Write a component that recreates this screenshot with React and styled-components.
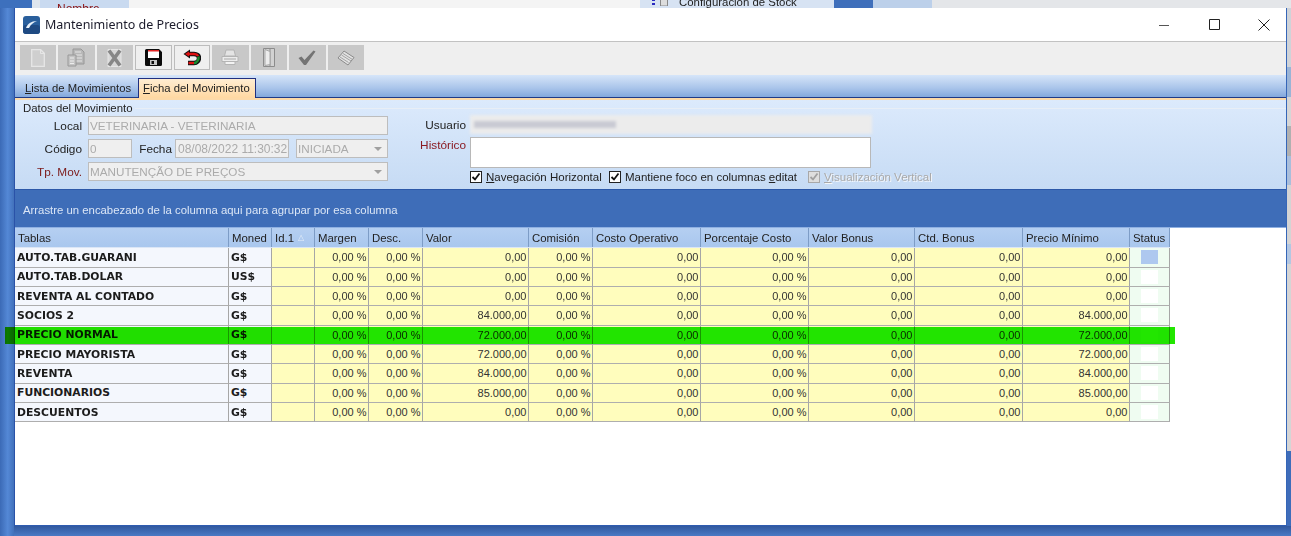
import React from 'react'
import styled, { createGlobalStyle } from 'styled-components'

const COLUMNS = '214px 43px 43px 54px 54px 106px 64px 108px 108px 106px 108px 107px 40px'

const HEADERS = ['Tablas', 'Moned', 'Id.1', 'Margen', 'Desc.', 'Valor', 'Comisión', 'Costo Operativo', 'Porcentaje Costo', 'Valor Bonus', 'Ctd. Bonus', 'Precio Mínimo', 'Status']

const ROWS = [
    { name: 'AUTO.TAB.GUARANI', coin: 'G$', price: '0,00', active: true },
    { name: 'AUTO.TAB.DOLAR', coin: 'US$', price: '0,00' },
    { name: 'REVENTA AL CONTADO', coin: 'G$', price: '0,00' },
    { name: 'SOCIOS 2', coin: 'G$', price: '84.000,00' },
    { name: 'PRECIO NORMAL', coin: 'G$', price: '72.000,00', marked: true },
    { name: 'PRECIO MAYORISTA', coin: 'G$', price: '72.000,00' },
    { name: 'REVENTA', coin: 'G$', price: '84.000,00' },
    { name: 'FUNCIONARIOS', coin: 'G$', price: '85.000,00' },
    { name: 'DESCUENTOS', coin: 'G$', price: '0,00' },
]

function NewIcon() {
    return (
        <svg width="14" height="18" viewBox="0 0 14 18">
            <path d="M.7.7h9l3.600 3.600v13H.7z" fill="#cfcfcf" stroke="#e6e6e6" strokeWidth="1.300" />
            <path d="M9.500.7v3.800h3.800" fill="none" stroke="#e6e6e6" />
        </svg>
    )
}

function CopyIcon() {
    return (
        <svg width="19" height="19" viewBox="0 0 19 19">
            <path d="M6 1h8l3 3v12H6z" fill="#b8b8b8" stroke="#989898" />
            <path d="M8 4h6M8 7h7M8 10h7M8 13h7" stroke="#e6e6e6" />
            <path d="M1 7h8v11H1z" fill="#c4c4c4" stroke="#989898" />
            <path d="M3 10h4M3 13h4M3 15.500h4" stroke="#ececec" />
        </svg>
    )
}

function DeleteIcon() {
    return (
        <svg width="15" height="18" viewBox="0 0 15 18">
            <path d="M1 .5h13v17H1z" fill="#d8d8d8" stroke="#e6e6e6" />
            <path d="M2 1.500l11 15M13 1.500l-11 15" stroke="#878787" strokeWidth="3.600" />
        </svg>
    )
}

function SaveIcon() {
    return (
        <svg width="17" height="17" viewBox="0 0 17 17">
            <path d="M1.500 0h12.500L17 3V15.500A1.500 1.500 0 0 1 15.500 17h-14A1.500 1.500 0 0 1 0 15.500V1.500A1.500 1.500 0 0 1 1.500 0z" fill="#0b0b0b" />
            <path d="M3 1h11v8H3z" fill="#fff" />
            <path d="M3 1h11v1.500H3z" fill="#e32626" />
            <path d="M5 11h7v5H5z" fill="#c4c4c4" />
            <path d="M6.500 12h2.500v3H6.500z" fill="#0b0b0b" />
        </svg>
    )
}

function UndoIcon() {
    return (
        <svg width="18" height="17" viewBox="0 0 18 17">
            <path d="M6 5h5c3 0 5 1.500 5 4s-2 5-5 5H5" fill="none" stroke="#111" strokeWidth="4.400" />
            <path d="M7 0.500v9L.5 5z" fill="#111" />
            <path d="M6 2.500v5L2 5z" fill="#e01010" />
            <path d="M6 5h5c2 0 3.500.8 4.200 2" fill="none" stroke="#e01010" strokeWidth="2.400" />
            <path d="M15.500 7.500c.6 2.800-1.500 6.500-4.500 6.500" fill="none" stroke="#1a8a2c" strokeWidth="2.400" />
            <path d="M11 14H5.500" fill="none" stroke="#e01010" strokeWidth="2.400" />
        </svg>
    )
}

function PrintIcon() {
    return (
        <svg width="18" height="17" viewBox="0 0 18 17">
            <path d="M5 1h8l1.500 6h-11z" fill="#e4e4e4" stroke="#b4b4b4" />
            <path d="M1 7.500h16v5H1z" fill="#ececec" stroke="#b4b4b4" />
            <path d="M4 12.500h10v3H4z" fill="#f2f2f2" stroke="#b4b4b4" />
            <path d="M3 10h12" stroke="#a8a8a8" />
        </svg>
    )
}

function DoorIcon() {
    return (
        <svg width="12" height="19" viewBox="0 0 12 19">
            <path d="M.5.500h11v18H.5z" fill="#d2d2d2" stroke="#8c8c8c" />
            <path d="M7 1v17" stroke="#8c8c8c" />
            <path d="M2 1.500l5 2v13l-5 1z" fill="#ececec" stroke="#a8a8a8" />
        </svg>
    )
}

function CheckIcon() {
    return (
        <svg width="18" height="16" viewBox="0 0 18 16">
            <path d="M.5 8l3-1.500 3 3.500 9-9.500 2 1-9.500 13.500h-2z" fill="#747474" />
        </svg>
    )
}

function BookIcon() {
    return (
        <svg width="18" height="16" viewBox="0 0 18 16">
            <path d="M1 8l6-7 10 6.500-6 7.500z" fill="#e2e2e2" stroke="#8a8a8a" />
            <path d="M4.500 5l9.500 6M6 3.500l9.500 6M3 7l8.500 5.500" stroke="#a2a2a2" />
        </svg>
    )
}

function AppIcon() {
    return (
        <svg width="17" height="18" viewBox="0 0 17 18">
            <rect width="17" height="18" rx="3" fill="#2a5f9c" />
            <rect y="9" width="17" height="9" rx="3" fill="#1f4a82" />
            <path d="M3 12c1.500-4 5-7 11-7-3 1-6 3-8 7z" fill="#e8f1fa" />
        </svg>
    )
}

function TinyCheck() {
    return (
        <svg width="10" height="10" viewBox="0 0 10 10">
            <path d="M1.500 5l2.500 2.500 4.500-6" fill="none" stroke="currentColor" strokeWidth="1.800" />
        </svg>
    )
}

function StockIcon() {
    return (
        <svg width="16" height="8" viewBox="0 0 16 8">
            <path d="M0 1h3v2H0zM0 5h3v2H0z" fill="#2a2ac0" />
            <path d="M8.500 0h7v8h-7z" fill="#ddd" stroke="#888" />
        </svg>
    )
}

const TOOLS = [
    { icon: <NewIcon /> },
    { icon: <CopyIcon /> },
    { icon: <DeleteIcon /> },
    { icon: <SaveIcon />, enabled: true },
    { icon: <UndoIcon />, enabled: true },
    { icon: <PrintIcon /> },
    { icon: <DoorIcon /> },
    { icon: <CheckIcon /> },
    { icon: <BookIcon /> },
]

function App() {
    return (
        <Desktop>
            <GlobalStyle />
            <BackTop>
                <BackPiece $w="32px" $bg="#3d70bd" />
                <BackPiece $w="8px" $bg="#dfe6ee" />
                <BackPiece $w="89px" $bg="#c9daf0"><BackLabel $red>Nombre</BackLabel></BackPiece>
                <BackPiece $w="511px" $bg="#f4f4f4" />
                <BackPiece $w="194px" $bg="#d7e3f3"><BackLabel><StockIcon />Configuración de Stock</BackLabel></BackPiece>
                <BackPiece $w="39px" $bg="#3f6fbb" />
                <BackPiece $w="59px" $bg="#bcd0ea" />
                <BackPiece $grow $bg="#e4e6e9" />
            </BackTop>
            <BackLeft />
            <Window>
                <TitleBar>
                    <AppIcon />
                    <TitleText>Mantenimiento de Precios</TitleText>
                    <WindowButtons>
                        <WindowButton>
                            <svg width="10" height="10" viewBox="0 0 10 10"><path d="M0 5.500h10" stroke="#555" /></svg>
                        </WindowButton>
                        <WindowButton>
                            <svg width="11" height="11" viewBox="0 0 11 11"><path d="M.5.500h10v10H.5z" fill="none" stroke="#222" /></svg>
                        </WindowButton>
                        <WindowButton>
                            <svg width="12" height="12" viewBox="0 0 12 12"><path d="M.5.500l11 11M11.500.500l-11 11" stroke="#222" /></svg>
                        </WindowButton>
                    </WindowButtons>
                </TitleBar>
                <Toolbar>
                    {TOOLS.map((tool, i) => (
                        <ToolButton key={i} $enabled={tool.enabled}>{tool.icon}</ToolButton>
                    ))}
                </Toolbar>
                <TabStrip>
                    <Tab><u>L</u>ista de Movimientos</Tab>
                    <Tab $active><u>F</u>icha del Movimiento</Tab>
                </TabStrip>
                <FormPanel>
                    <Legend>Datos del Movimiento</Legend>
                    <FormBody>
                        <LeftColumn>
                            <FieldRow>
                                <Label>Local</Label>
                                <Field $w="300px">VETERINARIA - VETERINARIA</Field>
                            </FieldRow>
                            <FieldRow>
                                <Label>Código</Label>
                                <Field $w="44px">0</Field>
                                <InlineLabel>Fecha</InlineLabel>
                                <Field $w="114px" $wide>08/08/2022 11:30:32</Field>
                                <Field $w="92px" $gap $select>INICIADA<Arrow /></Field>
                            </FieldRow>
                            <FieldRow>
                                <Label $required>Tp. Mov.</Label>
                                <Field $w="300px" $select>MANUTENÇÃO DE PREÇOS<Arrow /></Field>
                            </FieldRow>
                        </LeftColumn>
                        <RightColumn>
                            <RightRow>
                                <RightLabel>Usuario</RightLabel>
                                <BlurredField><BlurredText /></BlurredField>
                            </RightRow>
                            <RightRow $top>
                                <RightLabel $required>Histórico</RightLabel>
                                <Memo />
                            </RightRow>
                            <OptionsRow>
                                <Option $w="139px">
                                    <CheckBox><TinyCheck /></CheckBox>
                                    <span><u>N</u>avegación Horizontal</span>
                                </Option>
                                <Option $w="190px">
                                    <CheckBox><TinyCheck /></CheckBox>
                                    <span>Mantiene foco en columnas <u>e</u>ditat</span>
                                </Option>
                                <Option $disabled>
                                    <CheckBox $disabled><TinyCheck /></CheckBox>
                                    <span><u>V</u>isualización Vertical</span>
                                </Option>
                            </OptionsRow>
                        </RightColumn>
                    </FormBody>
                </FormPanel>
                <GroupBar>Arrastre un encabezado de la columna aqui para agrupar por esa columna</GroupBar>
                <Grid>
                    <HeaderRow>
                        {HEADERS.map((h, i) => (
                            <HeaderCell key={h}>
                                {h}
                                {i === 2 && <SortMark>△</SortMark>}
                            </HeaderCell>
                        ))}
                    </HeaderRow>
                    {ROWS.map(row => (
                        <Row key={row.name} $marked={row.marked}>
                            <NameCell>{row.name}</NameCell>
                            <NameCell $coin>{row.coin}</NameCell>
                            <NumCell />
                            <NumCell>0,00 %</NumCell>
                            <NumCell>0,00 %</NumCell>
                            <NumCell>{row.price}</NumCell>
                            <NumCell>0,00 %</NumCell>
                            <NumCell>0,00</NumCell>
                            <NumCell>0,00 %</NumCell>
                            <NumCell>0,00</NumCell>
                            <NumCell>0,00</NumCell>
                            <NumCell>{row.price}</NumCell>
                            <StatusCell><StatusBox $active={row.active} /></StatusCell>
                        </Row>
                    ))}
                </Grid>
            </Window>
            <BackRight>
                <RightBit $h="60px" $bg="#cfd3d8" />
                <RightBit $h="30px" $bg="#9ab4d6" />
                <RightBit $h="30px" $bg="#d6d6d6" />
                <RightBit $h="30px" $bg="#b0b0b0" />
                <RightBit $h="30px" $bg="#a9bedb" />
                <RightBit $h="60px" $bg="#d4d4d4" />
                <RightBit $h="20px" $bg="#b3c7e2" />
                <RightBit $h="190px" $bg="#d5d5d5" />
                <RightBit $h="76px" $bg="#3f6dba" />
            </BackRight>
            <BackBottom />
        </Desktop>
    )
}

export default App

const GlobalStyle = createGlobalStyle`
    html, body {
        margin: 0;
        padding: 0;
        overflow: hidden;
    }
    body {
        font-family: "Liberation Sans", Arial, sans-serif;
        font-size: 11px;
        color: #222;
    }
    u {
        text-decoration-thickness: 1px;
    }
`

const Desktop = styled.div`
    width: 1291px;
    height: 536px;
    display: grid;
    grid-template-columns: 14px 1273px 4px;
    grid-template-rows: 8px 518px 10px;
    background: #3f6dba;
    filter: blur(.35px);
    overflow: hidden;
`

const BackTop = styled.div`
    grid-column: 1 / 4;
    display: flex;
    overflow: hidden;
`

const BackPiece = styled.div`
    width: ${p => p.$w || 'auto'};
    flex: ${p => (p.$grow ? 1 : 'none')};
    background: ${p => p.$bg};
    overflow: hidden;
`

const BackLabel = styled.div`
    display: flex;
    align-items: center;
    gap: 11px;
    margin-top: ${p => (p.$red ? '2px' : '-5px')};
    padding-left: ${p => (p.$red ? '17px' : '12px')};
    font-size: ${p => (p.$red ? '12px' : '11.400px')};
    line-height: 14px;
    white-space: nowrap;
    color: ${p => (p.$red ? '#8a1414' : '#222')};
`

const BackLeft = styled.div`
    grid-row: 2 / 4;
    background: linear-gradient(90deg, #3b6ab6 0%, #5488d6 55%, #4271bb 100%);
`

const BackRight = styled.div`
    display: flex;
    flex-direction: column;
`

const RightBit = styled.div`
    height: ${p => p.$h};
    background: ${p => p.$bg};
`

const BackBottom = styled.div`
    grid-column: 2 / 4;
    background: linear-gradient(180deg, #31599f 0%, #4a79c4 100%);
`

const Window = styled.div`
    display: flex;
    flex-direction: column;
    background: #fff;
    border-left: 1px solid #2a52a8;
    border-right: 1px solid #3566b8;
    border-bottom: 1px solid #2f5cb0;
    box-sizing: border-box;
    min-width: 0;
`

const TitleBar = styled.div`
    height: 33px;
    flex: none;
    display: flex;
    align-items: center;
    padding-left: 8px;
    border-bottom: 1px solid #c2c2c2;
    background: #fff;
`

const TitleText = styled.div`
    margin-left: 5px;
    font-family: "Noto Sans", sans-serif;
    font-size: 12.5px;
    color: #1a1a2a;
`

const WindowButtons = styled.div`
    margin-left: auto;
    margin-right: -3px;
    display: flex;
`

const WindowButton = styled.div`
    width: 50px;
    height: 32px;
    display: flex;
    align-items: center;
    justify-content: center;
`

const Toolbar = styled.div`
    height: 33px;
    flex: none;
    box-sizing: border-box;
    display: flex;
    gap: 2px;
    padding: 3px 0 0 4.500px;
    background: #efefef;
`

const ToolButton = styled.div`
    width: 36.500px;
    height: 25px;
    box-sizing: border-box;
    display: flex;
    align-items: center;
    justify-content: center;
    background: ${p => (p.$enabled ? '#efefef' : '#c8c8c8')};
    border: 1px solid ${p => (p.$enabled ? '#bcbcbc' : '#c8c8c8')};
`

const TabStrip = styled.div`
    height: 23px;
    flex: none;
    box-sizing: border-box;
    display: flex;
    align-items: flex-end;
    background: linear-gradient(180deg, #d6e5f9 0%, #a9c4ea 60%, #83a8dc 100%);
    border-bottom: 1px solid #1f3a86;
`

const Tab = styled.div`
    width: ${p => (p.$active ? '118px' : '123px')};
    height: ${p => (p.$active ? '20px' : '19px')};
    box-sizing: border-box;
    padding: ${p => (p.$active ? '2px 0 0 4px' : '2px 0 0 10px')};
    font-size: 11.300px;
    line-height: 15px;
    color: #222;
    white-space: nowrap;
    margin-bottom: -1px;
    ${p => p.$active && `
        background: linear-gradient(180deg, #ffedd2 0%, #ffd8a2 100%);
        border: 1px solid #1f2f80;
        border-bottom: none;
    `}
`

const FormPanel = styled.div`
    height: 91px;
    flex: none;
    box-sizing: border-box;
    border-top: 2px solid #fcd9a8;
    background: linear-gradient(180deg, #dceafc 0%, #c6dbf4 100%);
`

const Legend = styled.div`
    height: 14px;
    margin-top: 1px;
    padding-left: 8px;
    line-height: 14px;
    font-size: 11.400px;
    color: #222;
    display: flex;
    align-items: center;
    &::after {
        content: '';
        flex: 1;
        height: 1px;
        margin-left: 2px;
        background: #e8eef6;
    }
`

const FormBody = styled.div`
    display: flex;
    padding-top: 1px;
`

const LeftColumn = styled.div`
    width: 373px;
    flex: none;
    display: flex;
    flex-direction: column;
    gap: 4px;
`

const FieldRow = styled.div`
    display: flex;
    align-items: center;
    height: 19px;
`

const Label = styled.div`
    width: 67px;
    margin-right: 6px;
    text-align: right;
    font-size: 11.800px;
    color: ${p => (p.$required ? '#7c1a1a' : '#222')};
`

const InlineLabel = styled.div`
    width: 43px;
    padding-right: 3px;
    box-sizing: border-box;
    text-align: right;
    font-size: 11.800px;
`

const Field = styled.div`
    width: ${p => p.$w};
    height: 19px;
    box-sizing: border-box;
    margin-left: ${p => (p.$gap ? '7px' : '0')};
    padding-left: ${p => (p.$wide ? '2px' : '1px')};
    display: flex;
    align-items: center;
    justify-content: space-between;
    background: #efefef;
    border: 1px solid #bdbdbd;
    color: #ababab;
    font-size: ${p => (p.$wide ? '12px' : '11.700px')};
    white-space: nowrap;
    overflow: hidden;
`

const Arrow = styled.span`
    width: 0;
    height: 0;
    margin-right: 5px;
    border-left: 4px solid transparent;
    border-right: 4px solid transparent;
    border-top: 4px solid #a0a0a0;
`

const RightColumn = styled.div`
    display: flex;
    flex-direction: column;
    margin-top: -1px;
`

const RightRow = styled.div`
    display: flex;
    align-items: ${p => (p.$top ? 'flex-start' : 'center')};
    margin-top: ${p => (p.$top ? '3px' : '0')};
`

const RightLabel = styled.div`
    width: 78px;
    margin-right: 4px;
    padding-top: ${p => (p.$required ? '1px' : '0')};
    text-align: right;
    font-size: 11.800px;
    color: ${p => (p.$required ? '#8a1a22' : '#222')};
`

const BlurredField = styled.div`
    width: 402px;
    height: 19px;
    display: flex;
    align-items: center;
    padding-left: 4px;
    box-sizing: border-box;
    background: #ececec;
    filter: blur(1.500px);
`

const BlurredText = styled.div`
    width: 142px;
    height: 7px;
    background: #c9cad3;
`

const Memo = styled.div`
    width: 401px;
    height: 31px;
    box-sizing: border-box;
    background: #fff;
    border: 1px solid #b8b8b8;
`

const OptionsRow = styled.div`
    display: flex;
    margin-top: 2px;
    margin-left: 82px;
    height: 14px;
`

const Option = styled.div`
    width: ${p => p.$w || 'auto'};
    flex: none;
    margin-right: ${p => (p.$w === '190px' ? '9px' : '0')};
    display: flex;
    align-items: center;
    gap: 4px;
    font-size: 11.500px;
    white-space: nowrap;
    overflow: hidden;
    color: ${p => (p.$disabled ? '#a9a9a9' : '#222')};
    text-shadow: ${p => (p.$disabled ? '1px 1px 0 #f4f7fb' : 'none')};
`

const CheckBox = styled.span`
    width: 12px;
    height: 12px;
    flex: none;
    box-sizing: border-box;
    display: flex;
    align-items: center;
    justify-content: center;
    background: ${p => (p.$disabled ? '#dedede' : '#fff')};
    border: 1px solid ${p => (p.$disabled ? '#a8a8a8' : '#222')};
    color: ${p => (p.$disabled ? '#a0a0a0' : '#111')};
`

const GroupBar = styled.div`
    height: 39px;
    flex: none;
    box-sizing: border-box;
    padding: 13px 0 0 8px;
    background: #3e6db8;
    border-top: 1px solid #2c58a8;
    border-bottom: 1px solid #8fb0e2;
    font-size: 11.350px;
    line-height: 14px;
    color: #dbe6f6;
`

const Grid = styled.div`
    display: flex;
    flex-direction: column;
    width: fit-content;
`

const HeaderRow = styled.div`
    display: grid;
    grid-template-columns: ${COLUMNS};
    height: 20.300px;
    background: linear-gradient(180deg, #b5cff1 0%, #a9c7ee 100%);
    border-bottom: 1px solid #dbe6f6;
    box-sizing: border-box;
`

const HeaderCell = styled.div`
    display: flex;
    align-items: center;
    gap: 4px;
    box-sizing: border-box;
    padding-left: 3px;
    border-right: 1px solid #7d9cc6;
    font-size: 11.400px;
    color: #222;
    white-space: nowrap;
    overflow: hidden;
`

const SortMark = styled.span`
    font-size: 8px;
    color: #e5edf8;
`

const Row = styled.div`
    display: grid;
    grid-template-columns: ${COLUMNS};
    height: 19.330px;
    position: relative;
    ${p => p.$marked && `
        &::after {
            content: '';
            position: absolute;
            left: -10px;
            right: -5px;
            top: 1px;
            bottom: 1px;
            background: #22e600;
            mix-blend-mode: multiply;
        }
    `}
`

const NameCell = styled.div`
    display: flex;
    align-items: center;
    box-sizing: border-box;
    padding-left: 2px;
    background: #f4f7fd;
    border-right: 1px solid #a6a6a6;
    border-bottom: 1px solid #aeaeae;
    font-family: "DejaVu Sans", Verdana, sans-serif;
    font-weight: 700;
    font-size: 10.800px;
    color: #1c1c1c;
    white-space: nowrap;
    overflow: hidden;
`

const NumCell = styled.div`
    display: flex;
    align-items: center;
    justify-content: flex-end;
    box-sizing: border-box;
    padding-right: 1.500px;
    background: #fffdbd;
    border-right: 1px solid #a6a6a6;
    border-bottom: 1px solid #aeaeae;
    font-size: 11px;
    color: #333;
    white-space: nowrap;
`

const StatusCell = styled.div`
    display: flex;
    align-items: center;
    justify-content: center;
    box-sizing: border-box;
    background: #effcf1;
    border-right: 1px solid #a6a6a6;
    border-bottom: 1px solid #aeaeae;
`

const StatusBox = styled.div`
    width: 17px;
    height: 14px;
    background: ${p => (p.$active ? '#aec8ef' : '#fff')};
`
